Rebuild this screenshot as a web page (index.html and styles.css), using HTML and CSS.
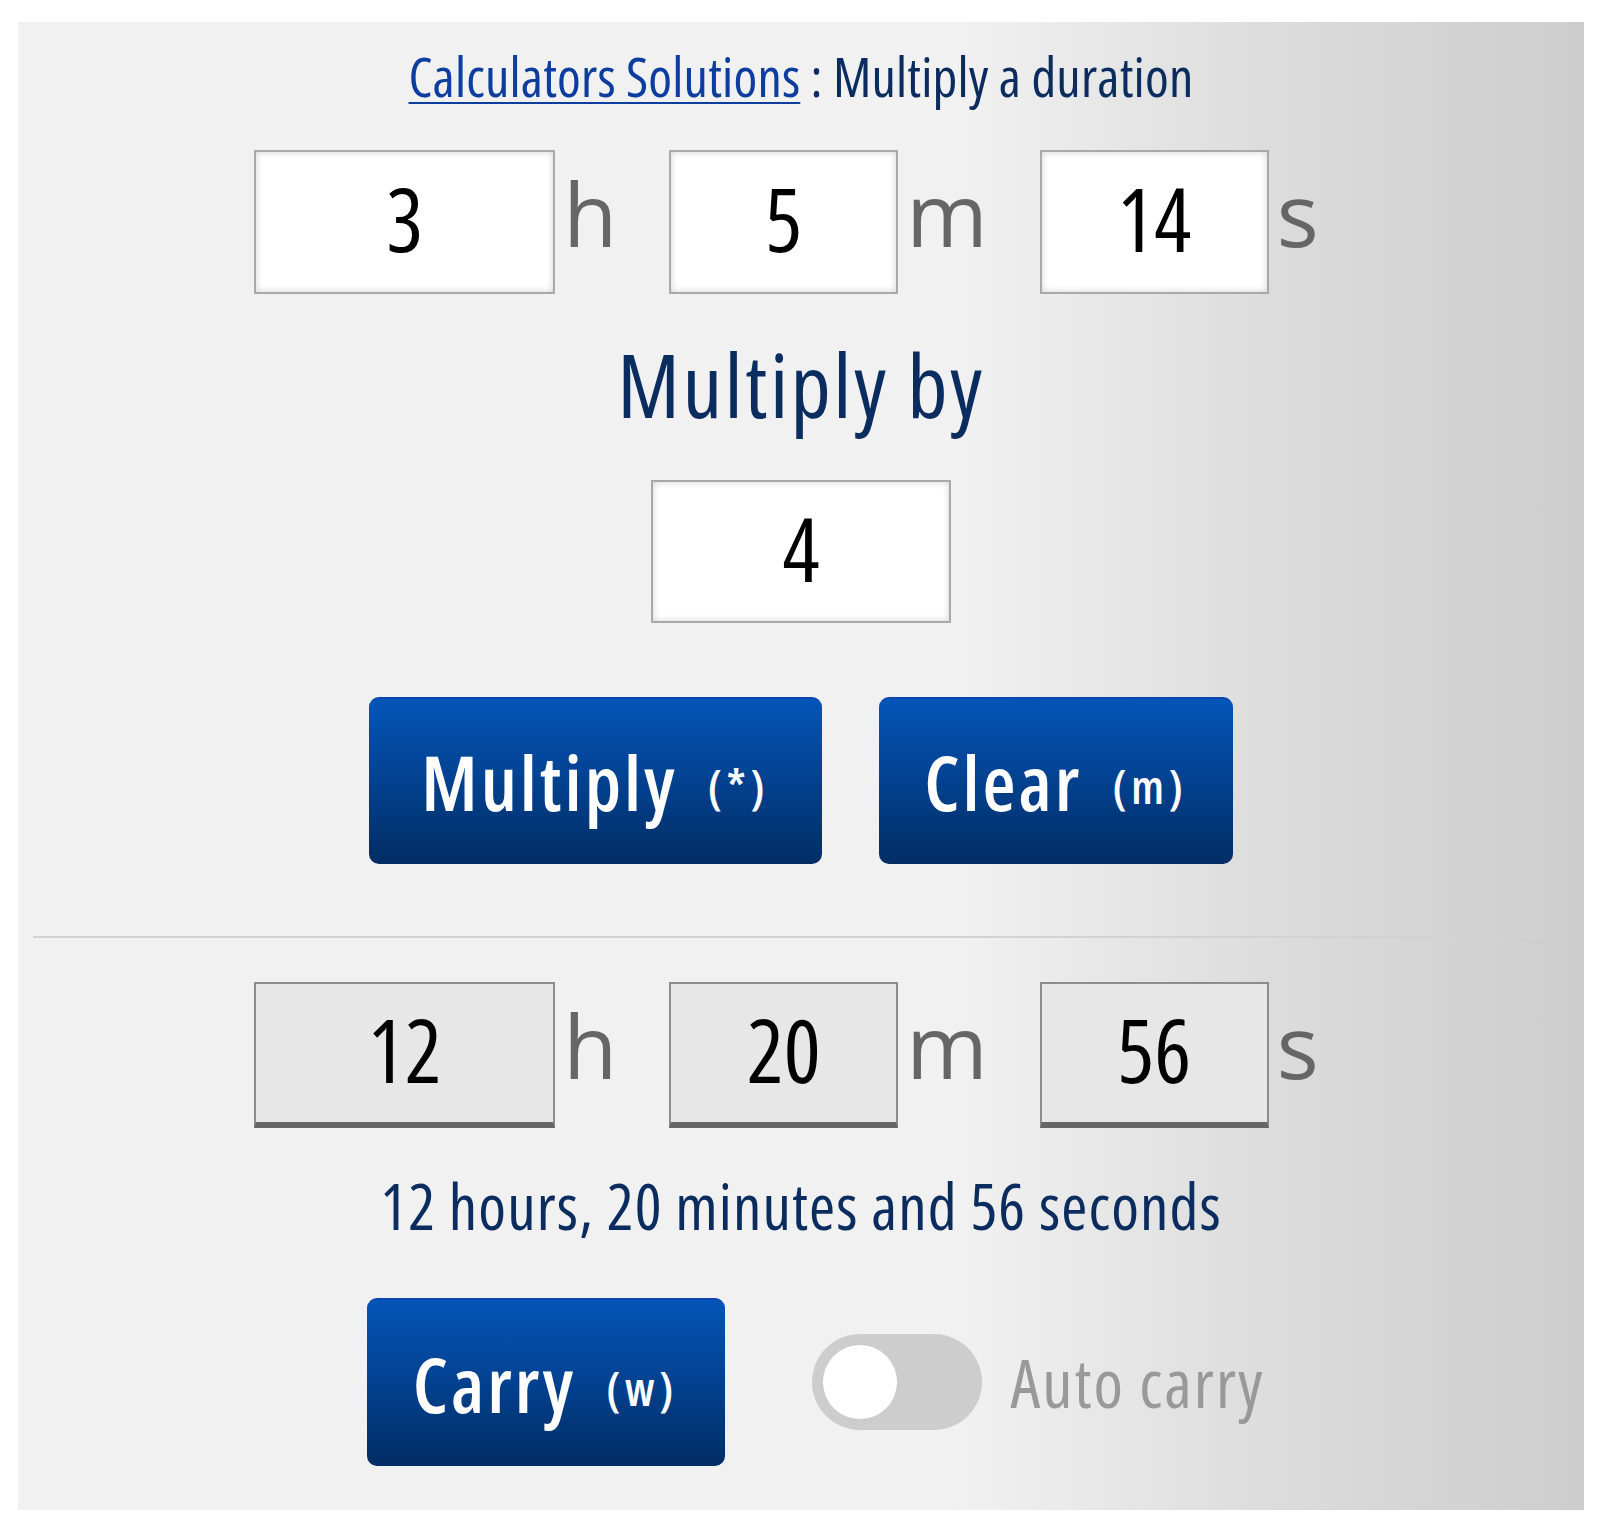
FILE: index.html
```html
<!DOCTYPE html>
<html lang="en">
<head>
  <meta charset="UTF-8">
  <meta name="viewport" content="width=device-width, initial-scale=1.0">
  <title>Multiply a duration - Calculators Solutions</title>
  <link rel="stylesheet" href="styles.css">
</head>
<body>
  <div class="calculator">
    <p class="title"><a href="#">Calculators Solutions</a> : Multiply a duration</p>

    <!-- Duration input -->
    <div class="duration-row">
      <input class="field field-wide" type="text" id="hours" value="3">
      <span class="unit">h</span>
      <input class="field" type="text" id="minutes" value="5">
      <span class="unit">m</span>
      <input class="field" type="text" id="seconds" value="14">
      <span class="unit">s</span>
    </div>

    <h2 class="multiply-label">Multiply by</h2>
    <input class="field field-factor" type="text" id="factor" value="4">

    <div class="actions">
      <button class="btn btn-multiply" id="multiplyBtn">Multiply<span class="key">(*)</span></button>
      <button class="btn btn-clear" id="clearBtn">Clear<span class="key">(m)</span></button>
    </div>

    <hr class="divider">

    <!-- Result -->
    <div class="duration-row">
      <input class="field field-wide result" type="text" id="resHours" value="12" readonly>
      <span class="unit">h</span>
      <input class="field result" type="text" id="resMinutes" value="20" readonly>
      <span class="unit">m</span>
      <input class="field result" type="text" id="resSeconds" value="56" readonly>
      <span class="unit">s</span>
    </div>

    <p class="result-text" id="resultText">12 hours, 20 minutes and 56 seconds</p>

    <div class="carry-row">
      <button class="btn btn-carry" id="carryBtn">Carry<span class="key">(w)</span></button>
      <label class="switch">
        <input type="checkbox" id="autoCarry">
        <span class="slider"></span>
      </label>
      <span class="switch-label">Auto carry</span>
    </div>
  </div>
</body>
</html>
```

FILE: styles.css
```css
/* General Styles */
body {
  margin: 0;
  background-color: #fff;
  font-family: "Open Sans", "DejaVu Sans Condensed", sans-serif;
  font-stretch: 75%;
}

.calculator {
  margin: 22px 16px 19px 18px;
  padding: 24px 0 44px;
  background: linear-gradient(to right, #f1f1f1 0%, #f1f1f1 60%, #dcdcdc 80%, #cdcdcd 100%);
  display: flex;
  flex-direction: column;
  align-items: center;
}

.title {
  margin: 0;
  font-size: 54px;
  line-height: 60px;
  letter-spacing: 0.2px;
  color: #0b2c5e;
}

.title a {
  color: #0d3d9f;
  text-decoration-thickness: 2px;
  text-underline-offset: 5px;
}

/* Duration rows */
.duration-row {
  display: flex;
  align-items: flex-start;
  margin-top: 44px;
  padding-right: 29px;
}

.field {
  box-sizing: border-box;
  width: 229px;
  height: 144px;
  padding: 0 0 8px;
  border: 2px solid #a9a9a9;
  background-color: #fff;
  box-shadow: inset 0 0 7px rgba(0, 0, 0, 0.18);
  font-family: inherit;
  font-stretch: 75%;
  font-size: 87px;
  color: #000;
  text-align: center;
  outline: none;
}

.field-wide {
  width: 301px;
}

.unit {
  margin: 19px 52px 0 8px;
  font-size: 88px;
  font-stretch: 100%;
  line-height: 88px;
  color: #666;
}

.unit:last-child {
  margin-right: 0;
}

/* Multiplier */
.multiply-label {
  margin: 40px 0 0;
  font-size: 88px;
  font-weight: normal;
  line-height: 100px;
  letter-spacing: 2.5px;
  color: #0b2c5e;
}

.field-factor {
  width: 300px;
  height: 143px;
  margin-top: 46px;
}

/* Buttons */
.actions {
  display: flex;
  gap: 57px;
  margin-top: 74px;
}

.btn {
  height: 167px;
  padding: 0;
  border: none;
  border-top: 2px solid #0a46b0;
  border-radius: 10px;
  background: linear-gradient(to bottom, #0455b8 0%, #02418f 50%, #022d64 100%);
  font-family: inherit;
  font-stretch: 75%;
  font-size: 76px;
  font-weight: 600;
  letter-spacing: 3px;
  color: #fff;
  cursor: pointer;
}

.btn .key {
  margin-left: 30px;
  font-size: 46px;
  letter-spacing: 5px;
  vertical-align: 7px;
}

.btn-multiply {
  width: 453px;
}

.btn-clear {
  width: 354px;
}

.divider {
  align-self: stretch;
  margin: 72px 34px 0 15px;
  height: 0;
  border: none;
  border-top: 2px solid #d2d2d2;
}

.divider + .duration-row {
  margin-top: 44px;
}

.result {
  height: 146px;
  border-color: #8d8d8d;
  border-bottom: 6px solid #666;
  background-color: #e7e7e7;
  box-shadow: none;
}

.result-text {
  margin: 43px 0 0;
  font-size: 63px;
  line-height: 70px;
  letter-spacing: 1.1px;
  color: #0b2c5e;
}

/* Carry */
.carry-row {
  display: flex;
  align-items: center;
  margin-top: 57px;
  padding-left: 29px;
}

.btn-carry {
  width: 358px;
  height: 168px;
}

.switch {
  position: relative;
  width: 170px;
  height: 96px;
  margin-left: 87px;
}

.switch input {
  display: none;
}

.slider {
  position: absolute;
  inset: 0;
  border-radius: 48px;
  background-color: #cdcdcd;
}

.slider::before {
  content: "";
  position: absolute;
  left: 11px;
  top: 11px;
  width: 74px;
  height: 74px;
  border-radius: 50%;
  background-color: #fff;
}

.switch-label {
  margin-left: 29px;
  font-size: 67px;
  letter-spacing: 2px;
  color: #999;
}
```
